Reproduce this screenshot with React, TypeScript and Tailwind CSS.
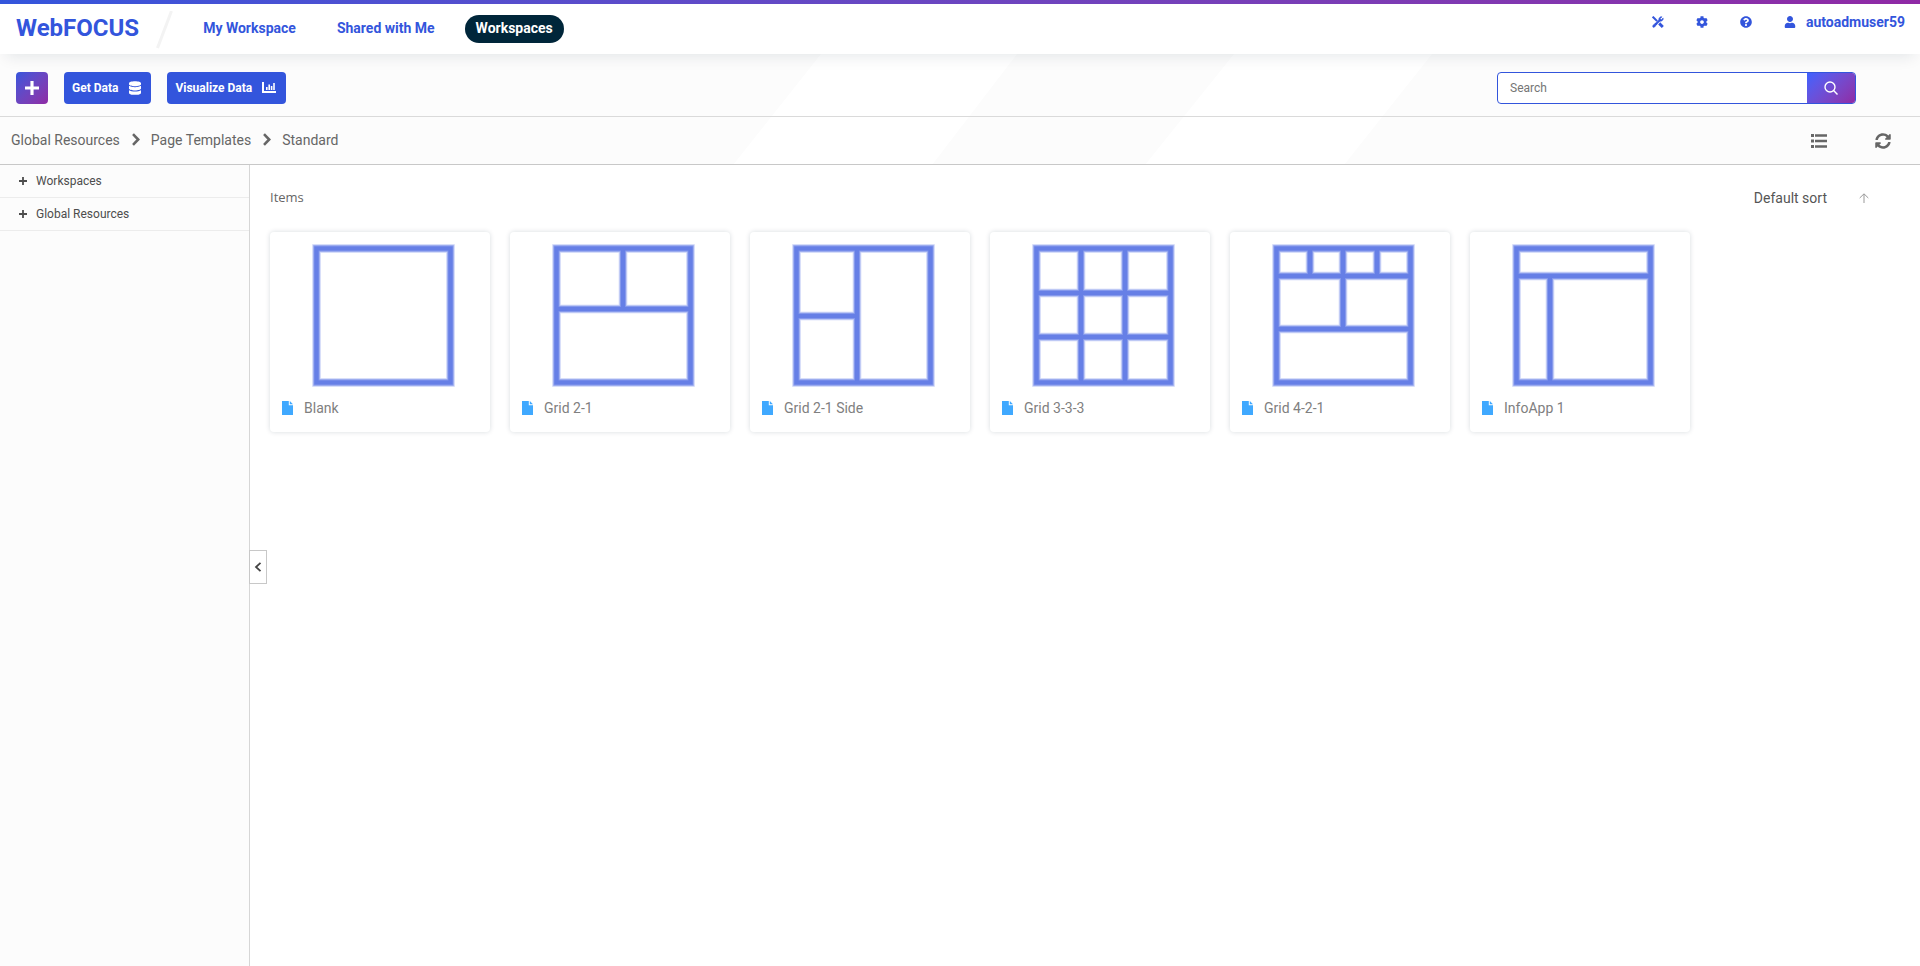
import { useState } from "react";
import { FaDatabase, FaCog, FaQuestionCircle, FaUser, FaSyncAlt } from "react-icons/fa";

type Template = { name: string; lines: string };

const FRAME = "M3.5 3.5H137.5V137.5H3.5Z";

const templates: Template[] = [
  { name: "Blank", lines: "" },
  { name: "Grid 2-1", lines: "M70 3V64M3 64H137" },
  { name: "Grid 2-1 Side", lines: "M64 3V137M3 71H64" },
  { name: "Grid 3-3-3", lines: "M48 3V137M92 3V137M3 48H137M3 92H137" },
  { name: "Grid 4-2-1", lines: "M37 3V31M70 3V84M104 3V31M3 31H137M3 84H137" },
  { name: "InfoApp 1", lines: "M3 31H137M37 31V137" },
];

function ToolsIcon() {
  return (
    <svg viewBox="0 0 14 14" className="size-3" fill="none" stroke="currentColor" aria-hidden="true">
      <path d="M4 10L10 4" strokeWidth="2.4" />
      <path d="M13 2.6L10.8 4.6L9.4 3.2L11.4 1A3 3 0 0 0 8.2 4.8L9.2 5.8A3 3 0 0 0 13 2.6Z" fill="currentColor" strokeWidth="1" />
      <path d="M5.4 9.6L3 12.8L1.2 13L1 11.2L4.2 8.4Z" fill="currentColor" strokeWidth="1" />
      <path d="M.8 .8L6 6" strokeWidth="2.4" />
      <path d="M8.4 8.6L12.6 12.8" strokeWidth="3.4" />
    </svg>
  );
}

function PlusIcon({ className }: { className: string }) {
  return (
    <svg viewBox="0 0 8 8" className={className} fill="none" stroke="currentColor" strokeWidth="1.8" aria-hidden="true">
      <path d="M4 0V8M0 4H8" />
    </svg>
  );
}

function ChartIcon() {
  return (
    <svg viewBox="0 0 14 12" className="h-3 w-[14px]" fill="currentColor" aria-hidden="true">
      <path d="M0 0H2V9H14V11H0ZM4 5H5.6V8H4ZM6.4 2.5H8V8H6.4ZM8.8 4H10.4V8H8.8ZM11.2 1H12.8V8H11.2Z" />
    </svg>
  );
}

function CrumbArrow() {
  return (
    <svg viewBox="0 0 9 13" className="h-[13px] w-[9px]" fill="none" stroke="currentColor" strokeWidth="2.6" aria-hidden="true">
      <path d="M2 1.2L7.2 6.5L2 11.8" />
    </svg>
  );
}

function ListIcon() {
  return (
    <svg viewBox="0 0 16 14" className="h-[14px] w-4" fill="currentColor" aria-hidden="true">
      <path d="M0 0H3V3H0ZM4 .3H16V2.7H4ZM0 5.5H3V8.5H0ZM4 5.8H16V8.2H4ZM0 11H3V14H0ZM4 11.3H16V13.7H4Z" />
    </svg>
  );
}

function FileIcon() {
  return (
    <svg viewBox="0 0 11 14" className="h-[14px] w-[11px] text-[#40a9ff]" fill="currentColor" aria-hidden="true">
      <path d="M0 0H6.8V4.2H11V14H0Z" />
      <path d="M7.8 0L11 3.2H7.8Z" />
    </svg>
  );
}

function Thumbnail({ lines }: { lines: string }) {
  return (
    <svg viewBox="0 0 141 141" className="size-[141px] overflow-visible" fill="none" aria-hidden="true">
      <g stroke="#e3e8fb" strokeWidth="9">
        <path d={FRAME} />
        <path d={lines} />
      </g>
      <g stroke="#b3bff3" strokeWidth="7.4">
        <path d={FRAME} />
        <path d={lines} />
      </g>
      <g stroke="#8599ec" strokeWidth="5.8">
        <path d={FRAME} />
        <path d={lines} />
      </g>
      <g stroke="#667fe6" strokeWidth="4.2">
        <path d={FRAME} />
        <path d={lines} />
      </g>
    </svg>
  );
}

function Header() {
  return (
    <header className="relative z-10 bg-white shadow-[0_8px_16px_-6px_rgba(0,38,58,0.11)]">
      <div className="h-1 bg-linear-to-r from-[#3355dc] to-[#8f29a5]" />
      <div className="flex h-[50px] justify-between">
        <div className="flex">
          <a href="#home" className="pt-2 pl-4 text-2xl leading-8 font-bold text-[#3355dc]">WebFOCUS</a>
          <svg viewBox="0 0 18 42" className="mt-[7px] ml-4 h-[42px] w-[18px]" aria-hidden="true">
            <path d="M16.5 0L2.5 37" stroke="#f3f3f3" strokeWidth="3" />
          </svg>
          <nav className="flex items-start gap-[19px] pt-[11px] pl-[19px] text-sm leading-[26px] font-bold text-[#3355dc]">
            <a href="#my" className="px-[11px]">My Workspace</a>
            <a href="#shared" className="px-[11px]">Shared with Me</a>
            <a href="#workspaces" aria-current="page" className="h-7 rounded-full bg-[#00263a] px-[11px] text-white">Workspaces</a>
          </nav>
        </div>
        <div className="flex items-center gap-8 self-start pt-2 pr-[15px] text-[#3355dc]">
          <button aria-label="Tools"><ToolsIcon /></button>
          <button aria-label="Settings"><FaCog className="size-3" /></button>
          <button aria-label="Help"><FaQuestionCircle className="size-3" /></button>
          <button className="flex items-center gap-[10px] text-sm leading-5 font-bold">
            <FaUser className="size-3" />
            autoadmuser59
          </button>
        </div>
      </div>
    </header>
  );
}

function Toolbar() {
  const [query, setQuery] = useState("");
  return (
    <div className="flex h-[63px] items-center justify-between border-b border-[#dadada] pt-[6px] pr-16 pl-4 text-xs font-bold text-white">
      <div className="flex gap-4">
        <button aria-label="Add" className="flex h-8 w-8 items-center justify-center rounded bg-linear-135 from-[#3355dc] to-[#8f29a5]">
          <PlusIcon className="size-[14px]" />
        </button>
        <button className="flex h-8 items-center gap-[11px] rounded bg-[#3355dc] pr-[10px] pl-2">
          Get Data <FaDatabase className="h-[14px] w-3" />
        </button>
        <button className="flex h-8 items-center gap-[10px] rounded bg-[#3355dc] pr-[10px] pl-2">
          Visualize Data <ChartIcon />
        </button>
      </div>
      <form role="search" className="flex h-8 w-[359px] overflow-hidden rounded border border-[#3355dc] bg-white" onSubmit={(e) => e.preventDefault()}>
        <input
          type="text"
          aria-label="Search"
          placeholder="Search"
          value={query}
          onChange={(e) => setQuery(e.target.value)}
          className="min-w-0 flex-1 px-3 font-normal text-[#333] outline-none placeholder:text-[#757575]"
        />
        <button aria-label="Run search" className="flex w-12 items-center justify-center bg-linear-135 from-[#3b62ff] to-[#8f29a5]">
          <svg viewBox="0 0 14 14" className="size-[14px]" fill="none" stroke="currentColor" strokeWidth="1.4" aria-hidden="true">
            <circle cx="6" cy="6" r="5" />
            <path d="M9.6 9.6L13.5 13.5" />
          </svg>
        </button>
      </form>
    </div>
  );
}

function Breadcrumbs() {
  return (
    <div className="flex h-12 items-center justify-between border-b border-[#c8c8c8] pr-[29px] pl-[11px] text-[#666]">
      <nav aria-label="Breadcrumb" className="flex items-center gap-[11px] pb-[2px] text-sm leading-5">
        <a href="#global">Global Resources</a>
        <CrumbArrow />
        <a href="#templates">Page Templates</a>
        <CrumbArrow />
        <a href="#standard">Standard</a>
      </nav>
      <div className="flex items-center gap-12">
        <button aria-label="List view"><ListIcon /></button>
        <button aria-label="Refresh"><FaSyncAlt className="size-4" /></button>
      </div>
    </div>
  );
}

function Sidebar() {
  return (
    <aside className="w-[250px] shrink-0 border-r border-[#d6d6d6] bg-[#fcfcfc]">
      <ul className="text-xs text-[#4d4d4d]">
        {["Workspaces", "Global Resources"].map((label) => (
          <li key={label} className="border-b border-[#ececec]">
            <button className="flex h-8 w-full items-center gap-[9px] pl-[19px]">
              <PlusIcon className="size-2" />
              {label}
            </button>
          </li>
        ))}
      </ul>
    </aside>
  );
}

function Content() {
  return (
    <main className="relative flex-1 bg-white px-5 pt-[23px]">
      <button aria-label="Collapse panel" className="absolute top-[385px] -left-px flex h-[34px] w-[18px] items-center justify-center border border-[#c8c8c8] bg-white text-[#444]">
        <svg viewBox="0 0 8 10" className="h-[10px] w-2" fill="none" stroke="currentColor" strokeWidth="1.8" aria-hidden="true">
          <path d="M6.5 .8L2 5L6.5 9.2" />
        </svg>
      </button>
      <div className="flex h-5 items-center justify-between pr-[31px] text-[#666]">
        <h2 className="font-['Open_Sans',sans-serif] text-[13px]">Items</h2>
        <div className="flex items-center gap-8">
          <button className="text-sm text-[#555]">Default sort</button>
          <button aria-label="Sort ascending" className="text-[#999]">
            <svg viewBox="0 0 10 10" className="size-[10px]" fill="none" stroke="currentColor" aria-hidden="true">
              <path d="M5 10V1M.7 5L5 .8L9.3 5" />
            </svg>
          </button>
        </div>
      </div>
      <ul className="mt-6 flex flex-wrap gap-5">
        {templates.map((t) => (
          <li key={t.name} className="flex h-[200px] w-[220px] flex-col rounded bg-white pt-[13px] shadow-[0_0_5px_rgba(0,38,58,0.16)]">
            <div className="flex justify-center pl-[6px]">
              <Thumbnail lines={t.lines} />
            </div>
            <div className="flex items-center gap-[11px] pt-3 pl-3 text-sm leading-5 text-[#808080]">
              <FileIcon />
              {t.name}
            </div>
          </li>
        ))}
      </ul>
    </main>
  );
}

export default function App() {
  return (
    <div className="flex min-h-screen flex-col bg-white font-[Roboto,'Liberation_Sans',sans-serif]">
      <Header />
      <div className="relative bg-[#fcfcfc]">
        <svg viewBox="0 0 700 111" className="absolute top-0 left-[733px] h-[111px] w-[700px]" fill="#fff" aria-hidden="true">
          <path d="M88 0H284L199 111H0ZM501 0H699L611 111H412Z" />
        </svg>
        <div className="relative">
          <Toolbar />
          <Breadcrumbs />
        </div>
      </div>
      <div className="flex flex-1">
        <Sidebar />
        <Content />
      </div>
    </div>
  );
}
